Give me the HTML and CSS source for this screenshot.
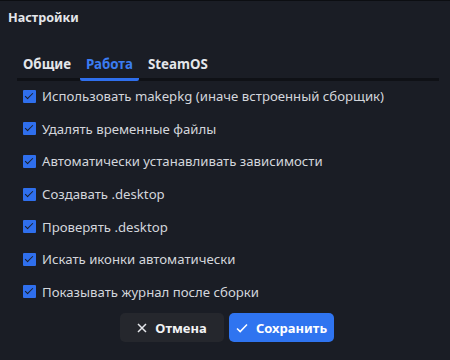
FILE: index.html
```html
<!DOCTYPE html>
<html lang="ru">
<head>
    <meta charset="UTF-8">
    <meta name="viewport" content="width=device-width, initial-scale=1.0">
    <title>Настройки</title>
    <link rel="stylesheet" href="styles.css">
</head>
<body>

    <div class="dialog">
        <h1 class="dialog-title">Настройки</h1>

        <!-- Вкладки -->
        <div class="tabs">
            <button class="tab">Общие</button>
            <button class="tab active">Работа</button>
            <button class="tab">SteamOS</button>
        </div>

        <!-- Опции сборки -->
        <div class="options">
            <label class="option"><input type="checkbox" checked><span class="box"></span>Использовать makepkg (иначе встроенный сборщик)</label>
            <label class="option"><input type="checkbox" checked><span class="box"></span>Удалять временные файлы</label>
            <label class="option"><input type="checkbox" checked><span class="box"></span>Автоматически устанавливать зависимости</label>
            <label class="option"><input type="checkbox" checked><span class="box"></span>Создавать .desktop</label>
            <label class="option"><input type="checkbox" checked><span class="box"></span>Проверять .desktop</label>
            <label class="option"><input type="checkbox" checked><span class="box"></span>Искать иконки автоматически</label>
            <label class="option"><input type="checkbox" checked><span class="box"></span>Показывать журнал после сборки</label>
        </div>

        <div class="actions">
            <button class="btn btn-cancel">
                <svg width="10" height="10" viewBox="0 0 10 10"><path d="M1 1 L9 9 M9 1 L1 9" stroke="#e6e8ec" stroke-width="1.5" fill="none"/></svg>
                Отмена
            </button>
            <button class="btn btn-save">
                <svg width="12" height="10" viewBox="0 0 12 10"><path d="M1 5.5 L4.2 8.6 L11 1.4" stroke="#ffffff" stroke-width="1.5" fill="none"/></svg>
                Сохранить
            </button>
        </div>
    </div>

</body>
</html>
```

FILE: styles.css
```css
body {
    margin: 0;
    background: #1a1d25;
    color: #d3d6dc;
    font-family: "Noto Sans", "Open Sans", sans-serif;
    border-top: 1px solid #0c0e12;
    height: 359px;
    overflow: hidden;
}

.dialog {
    padding: 8px 11px 0 8px;
}

.dialog-title {
    margin: 0;
    font-size: 12.6px;
    line-height: 18px;
    font-weight: bold;
    color: #e4e6ea;
}

/* Вкладки */
.tabs {
    display: flex;
    gap: 3px;
    margin: 23px 0 0 9px;
    border-bottom: 3px solid #0f1116;
}

.tab {
    background: none;
    border: none;
    padding: 0 6px;
    height: 31px;
    margin-bottom: -3px;
    border-bottom: 3px solid transparent;
    border-radius: 0;
    font-family: inherit;
    font-size: 13.3px;
    font-weight: bold;
    color: #e4e6ea;
    cursor: pointer;
}

.tab.active {
    color: #3b7cf2;
    border-bottom-color: #2f6fed;
    border-radius: 2px;
}

/* Опции */
.options {
    padding-left: 15px;
    margin-top: -1px;
}

.option {
    display: flex;
    align-items: center;
    height: 32.6px;
    font-size: 13.2px;
    cursor: pointer;
}

.option input {
    display: none;
}

.box {
    width: 13px;
    height: 13px;
    margin-right: 6px;
    border-radius: 1px;
    background: #2f6fed;
    position: relative;
}

.option input:checked + .box::after {
    content: "";
    position: absolute;
    left: 4px;
    top: 1px;
    width: 3px;
    height: 7px;
    border: solid #1a1d25;
    border-width: 0 1.5px 1.5px 0;
    transform: rotate(45deg);
}

/* Кнопки */
.actions {
    display: flex;
    justify-content: center;
    gap: 5px;
    margin-top: 5px;
    padding-left: 7px;
}

.btn {
    display: flex;
    align-items: center;
    justify-content: center;
    gap: 8px;
    height: 29px;
    border: none;
    border-radius: 5px;
    font-family: inherit;
    font-size: 13px;
    font-weight: bold;
    color: #f2f3f5;
    cursor: pointer;
}

.btn-cancel {
    width: 104px;
    background: #25272d;
}

.btn-save {
    width: 105px;
    background: #2f74f0;
    color: #ffffff;
}
```
